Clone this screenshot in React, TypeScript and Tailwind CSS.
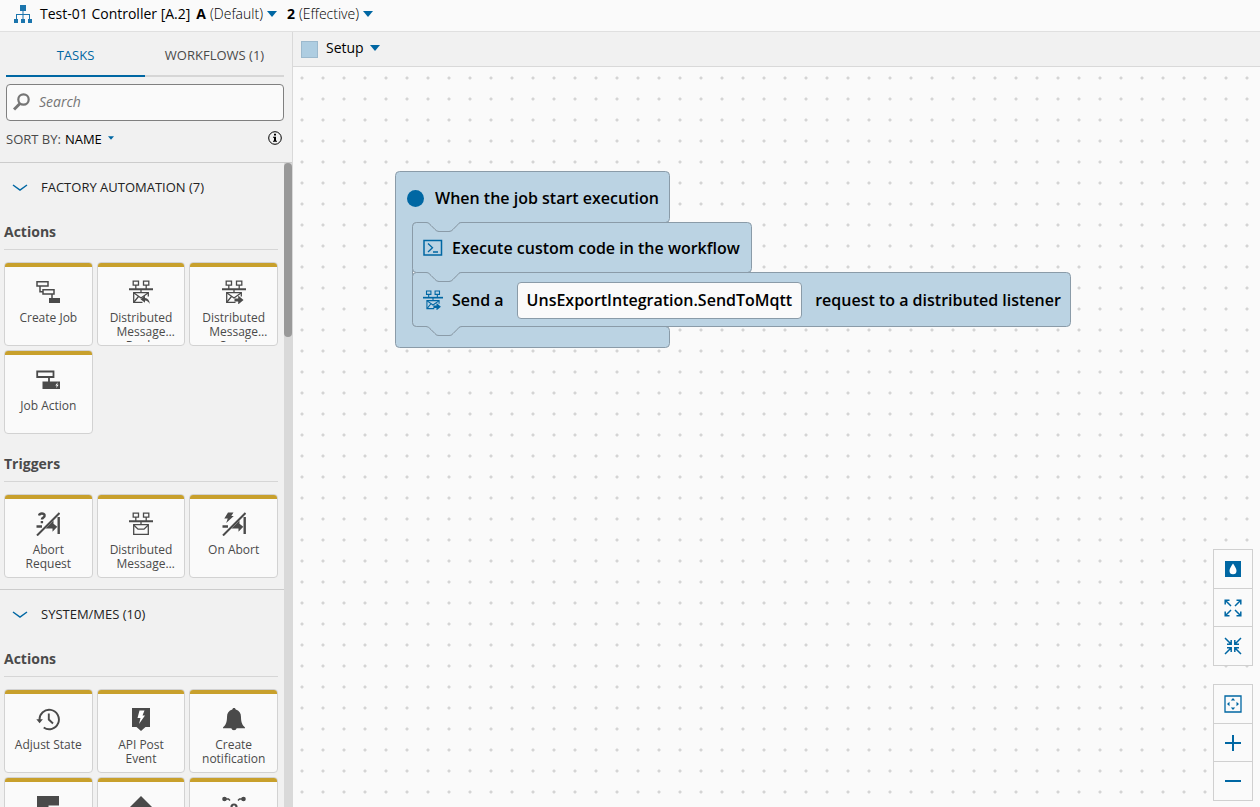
import type { ReactNode } from "react";

type IconProps = { className?: string };

function HierarchyIcon({ className }: IconProps) {
  return (
    <svg viewBox="0 0 18 18" className={className} fill="currentColor">
      <path d="M6 0h6v6H6zM0 14h4v4H0zM7 14h4v4H7zM14 14h4v4h-4z" />
      <path d="M8.500 6h1v3h6.500v5h-1v-4H9.500v4h-1v-4H3v4H2V9h6.500z" />
    </svg>
  );
}

function Caret({ className }: IconProps) {
  return (
    <svg viewBox="0 0 10 6" className={className} fill="currentColor">
      <path d="M0 0h10L5 6z" />
    </svg>
  );
}

function SearchIcon({ className }: IconProps) {
  return (
    <svg viewBox="0 0 18 18" className={className} fill="none" stroke="currentColor">
      <circle cx="10.500" cy="6.500" r="5.200" strokeWidth="2.200" />
      <path d="M7 10.500 1 16.500" strokeWidth="3" />
    </svg>
  );
}

function InfoIcon({ className }: IconProps) {
  return (
    <svg viewBox="0 0 14 14" className={className}>
      <circle cx="7" cy="7" r="6.300" fill="none" stroke="currentColor" />
      <path d="M6 2.800h2v1.800H6zM5 5.700h3v4h1v1H5v-1h1v-3H5z" fill="currentColor" />
    </svg>
  );
}

function ChevronIcon({ className }: IconProps) {
  return (
    <svg viewBox="0 0 16 8" className={className} fill="none" stroke="currentColor" strokeWidth="1.500">
      <path d="M1 1l7 5 7-5" />
    </svg>
  );
}

function CreateJobIcon({ className }: IconProps) {
  return (
    <svg viewBox="0 0 24 24" className={className} fill="none" stroke="currentColor" strokeWidth="1.500">
      <path d="M1 1.700h11v4.300H1zM7 9.700h11v4.300H7zM4 6v5.700h3M16 14v5" />
      <path d="M13 18h11v5H13z" fill="currentColor" stroke="none" />
    </svg>
  );
}

function JobActionIcon({ className }: IconProps) {
  return (
    <svg viewBox="0 0 24 24" className={className} fill="none" stroke="currentColor">
      <path d="M1.200 3.500h16.300v5.500H1.200zM13 9v5" strokeWidth="1.800" />
      <path d="M6.500 13.500H24V21H6.500z" fill="currentColor" stroke="none" />
      <path d="M21.800 14.200l-2.500 3.200h1.500l-.7 2.800 2.500-3.500h-1.500z" fill="#fff" stroke="none" />
    </svg>
  );
}

function NetworkMessageIcon({ className, tip }: IconProps & { tip?: "reply" | "send" }) {
  return (
    <svg viewBox="0 0 24 24" className={className} fill="none" stroke="currentColor" strokeWidth="1.300">
      <path d="M4.200 1.200h5.300v4H4.200zM14.500 1.200h5.300v4h-5.300zM6.800 5v4M17.200 5v4M12 9v3.500" />
      <path d="M0 9.200h24" strokeWidth="2" />
      <path d={tip ? "M13.500 22.300H4.700V12.700h14.600V16.500" : "M4.700 12.700h14.600v9.600H4.700z"} />
      <path d={tip ? "M5 13l7 5 7-5M5 22l4.500-5.500" : "M5 13.200l4 4h6l4-4"} />
      {tip === "send" && (
        <path d="M12.500 18.500h3.700v-3l5.300 4.500-5.300 4.500v-3h-3.700z" fill="currentColor" stroke="none" />
      )}
      {tip === "reply" && (
        <path d="M11.500 19.200l4.500-3.500v2.300c2.800.2 4.500 2.500 4.800 6-1.300-2.300-2.700-3.300-4.800-3.500v2.300z" fill="currentColor" stroke="none" />
      )}
    </svg>
  );
}

function AbortIcon({ className, variant }: IconProps & { variant: "question" | "bolt" }) {
  return (
    <svg viewBox="0 0 24 24" className={className} fill="none" stroke="currentColor">
      <path d="M1 23.500 23.500 1" strokeWidth="2" />
      <path d="M22.700 5v17" strokeWidth="2.400" />
      <path d="M.5 14.500H6" strokeWidth="2.600" />
      <path d="M9.500 16.500 17.500 8.500v3.200l3.800 3-4.800 5v-3.200z" fill="currentColor" stroke="none" />
      {variant === "question" ? (
        <path d="M3 3.500c.5-1.600 1.600-2 2.900-2 3.200 0 3.500 3 1.400 4.100-1.100.6-1.400 1-1.400 2M5.900 9v2.200" strokeWidth="2.400" />
      ) : (
        <path d="M6 .5h5.500L9.300 4h2.500L4.200 11l1.500-4.500H2.300z" fill="currentColor" stroke="none" />
      )}
    </svg>
  );
}

function HistoryIcon({ className }: IconProps) {
  return (
    <svg viewBox="0 0 24 24" className={className} fill="none" stroke="currentColor" strokeWidth="1.900">
      <path d="M3.500 13A9.700 9.700 0 1 1 7.700 20.500" />
      <path d="M12.800 6.500v6l4.200 4" />
      <path d="M.3 12.300h6.600L3.600 16.300z" fill="currentColor" stroke="none" />
    </svg>
  );
}

function ApiPostIcon({ className }: IconProps) {
  return (
    <svg viewBox="0 0 24 24" className={className} fill="currentColor">
      <path d="M3 1h18v19h-4.500L12 24l-4.500-4H3z" />
      <path d="M10.500 3.500h5L13.500 8.500H16l-6 8.500 1.500-6H8.500z" fill="#fff" />
    </svg>
  );
}

function BellIcon({ className }: IconProps) {
  return (
    <svg viewBox="0 0 24 24" className={className} fill="currentColor">
      <path d="M12 1c1 0 1.600.7 1.700 1.600 3.500.9 5.300 3.700 5.300 7.400 0 6 1.500 8 4 10.500v.8h-8.300a2.800 2.800 0 0 1-5.400 0H1v-.8C3.500 18 5 16 5 10c0-3.700 1.800-6.500 5.300-7.400C10.400 1.700 11 1 12 1z" />
    </svg>
  );
}

function NoteIcon({ className }: IconProps) {
  return (
    <svg viewBox="0 0 24 24" className={className} fill="currentColor">
      <path d="M1 1h22v9.500H12.500V23H1z" />
    </svg>
  );
}

function DiamondIcon({ className }: IconProps) {
  return (
    <svg viewBox="0 0 24 24" className={className} fill="currentColor">
      <path d="M12 1l11 11-11 11L1 12z" />
    </svg>
  );
}

function NodesIcon({ className }: IconProps) {
  return (
    <svg viewBox="0 0 24 24" className={className} fill="none" stroke="currentColor" strokeWidth="1.500">
      <path d="M3 4h3.500l1.500 1.500M21 4h-3.500L16 5.500M3 20h3.500L8 18.500M21 20h-3.500L16 18.500" />
      <circle cx="12" cy="12" r="2.500" strokeWidth="2.200" />
      <circle cx="2.500" cy="4" r="2.300" fill="currentColor" stroke="none" />
      <circle cx="21.500" cy="4" r="2.300" fill="currentColor" stroke="none" />
      <circle cx="2.500" cy="20" r="2.300" fill="currentColor" stroke="none" />
      <circle cx="21.500" cy="20" r="2.300" fill="currentColor" stroke="none" />
    </svg>
  );
}

function ConsoleIcon({ className }: IconProps) {
  return (
    <svg viewBox="0 0 20 18" className={className} fill="none" stroke="currentColor">
      <path d="M1 1.500h17.500v14.500H1z" strokeWidth="1.500" />
      <path d="M5 4.500l4.500 4.200L5 13M10 13h5" strokeWidth="1.300" />
    </svg>
  );
}

function DropIcon() {
  return (
    <svg viewBox="0 0 18 18" className="size-[18px]">
      <path d="M1 1h16v16H1z" fill="currentColor" />
      <path d="M9 3.500c1.500 2.500 3.500 4.800 3.500 7.200a3.500 3.500 0 0 1-7 0c0-2.400 2-4.700 3.500-7.200z" fill="#fff" />
    </svg>
  );
}

function ExpandIcon() {
  return (
    <svg viewBox="0 0 18 18" className="size-[18px]" fill="none" stroke="currentColor" strokeWidth="1.500">
      <path d="M7 7 1.500 1.500M1.200 5.500V1.200h4.300M11 7l5.500-5.500M12.500 1.200h4.300v4.300M7 11l-5.500 5.500M1.200 12.500v4.300h4.300M11 11l5.500 5.500M16.800 12.500v4.300h-4.300" />
    </svg>
  );
}

function CollapseIcon() {
  return (
    <svg viewBox="0 0 18 18" className="size-[18px]" fill="none" stroke="currentColor" strokeWidth="1.500">
      <path d="M1 1l6 6M7.200 3v4.200H3M17 1l-6 6M10.800 3v4.200H15M1 17l6-6M7.200 15v-4.200H3M17 17l-6-6M10.800 15v-4.200H15" />
    </svg>
  );
}

function FitIcon() {
  return (
    <svg viewBox="0 0 18 18" className="size-[18px]" fill="currentColor">
      <path d="M1 1h16v16H1z" fill="none" stroke="currentColor" strokeWidth="1.300" />
      <path d="M9 3l2.200 2.500H6.800zM9 15l2.200-2.500H6.800zM3 9l2.500-2.200v4.400zM15 9l-2.500-2.200v4.400z" />
    </svg>
  );
}

function PlusIcon() {
  return (
    <svg viewBox="0 0 18 18" className="size-[18px]" fill="none" stroke="currentColor" strokeWidth="2">
      <path d="M9 1v16M1 9h16" />
    </svg>
  );
}

function MinusIcon() {
  return (
    <svg viewBox="0 0 18 18" className="size-[18px]" fill="none" stroke="currentColor" strokeWidth="2">
      <path d="M1 9h16" />
    </svg>
  );
}

type Task = { label: string; icon: ReactNode };
type Group = { title: string; tasks: Task[] };
type Section = { title: string; groups: Group[] };

const sections: Section[] = [
  {
    title: "FACTORY AUTOMATION (7)",
    groups: [
      {
        title: "Actions",
        tasks: [
          { label: "Create Job", icon: <CreateJobIcon className="size-6" /> },
          { label: "Distributed Message Reply", icon: <NetworkMessageIcon className="size-6" tip="reply" /> },
          { label: "Distributed Message Send", icon: <NetworkMessageIcon className="size-6" tip="send" /> },
          { label: "Job Action", icon: <JobActionIcon className="size-6" /> },
        ],
      },
      {
        title: "Triggers",
        tasks: [
          { label: "Abort Request", icon: <AbortIcon className="size-6" variant="question" /> },
          { label: "Distributed Message consumer", icon: <NetworkMessageIcon className="size-6" /> },
          { label: "On Abort", icon: <AbortIcon className="size-6" variant="bolt" /> },
        ],
      },
    ],
  },
  {
    title: "SYSTEM/MES (10)",
    groups: [
      {
        title: "Actions",
        tasks: [
          { label: "Adjust State", icon: <HistoryIcon className="size-6" /> },
          { label: "API Post Event", icon: <ApiPostIcon className="size-6" /> },
          { label: "Create notification", icon: <BellIcon className="size-6" /> },
          { label: "", icon: <NoteIcon className="size-6" /> },
          { label: "", icon: <DiamondIcon className="size-6" /> },
          { label: "", icon: <NodesIcon className="size-6" /> },
        ],
      },
    ],
  },
];

function TaskCard({ task }: { task: Task }) {
  return (
    <button className="flex h-[84px] min-w-0 flex-col items-center overflow-hidden rounded-sm border border-[#d2d2d2] bg-[#fafafa] text-[#4a4a4a]">
      <span className="h-1 w-full shrink-0 bg-[#c8a02c]" />
      <span className="mt-[13px] shrink-0">{task.icon}</span>
      <span className="mt-[5px] line-clamp-2 w-full px-2 pb-[3px] pt-0.5 text-center text-xs leading-[14px]">
        {task.label}
      </span>
    </button>
  );
}

function TaskSection({ section }: { section: Section }) {
  return (
    <section className="border-b border-[#cccccc] pb-[11px]">
      <button className="flex h-[50px] w-full items-center gap-[13px] pl-3 text-[13px] text-[#222]">
        <ChevronIcon className="h-2 w-4 text-[#0067a3]" />
        {section.title}
      </button>
      <div className="flex flex-col gap-[11px] pl-1 pr-1.5">
        {section.groups.map((group) => (
          <div key={group.title}>
            <h3 className="mb-3 flex h-[37px] items-center border-b border-[#d6d6d6] pt-0.5 text-sm font-bold text-[#4a4a4a]">
              {group.title}
            </h3>
            <div className="grid grid-cols-3 gap-1">
              {group.tasks.map((task, i) => (
                <TaskCard key={i} task={task} />
              ))}
            </div>
          </div>
        ))}
      </div>
    </section>
  );
}

function Sidebar() {
  return (
    <aside className="flex w-[293px] shrink-0 flex-col border-r border-[#d9d9d9]">
      <div className="pl-1.5 pr-2">
        <div role="tablist" className="flex text-[13px]">
          <button role="tab" aria-selected="true" className="h-[45px] flex-1 border-b-2 border-[#0067a3] pt-1 text-[#0067a3]">
            TASKS
          </button>
          <button role="tab" aria-selected="false" className="h-[45px] flex-1 border-b-2 border-[#d6d6d6] pt-1 text-[#4a4a4a]">
            WORKFLOWS (1)
          </button>
        </div>
        <label className="mt-[7px] flex h-[37px] items-center gap-2 rounded border border-[#808080] bg-[#fafafa] px-1.5 pb-0.5">
          <SearchIcon className="size-[18px] shrink-0 text-[#757575]" />
          <input
            type="text"
            aria-label="Search"
            placeholder="Search"
            className="min-w-0 flex-1 bg-transparent text-sm outline-none placeholder:italic placeholder:text-[#757575]"
          />
        </label>
        <div className="flex h-[41px] items-center justify-between pb-1 text-[#4a4a4a]">
          <button className="flex items-center gap-1 text-[13px]">
            SORT BY: <span className="text-black">NAME</span>
            <Caret className="mb-1 ml-0.5 h-1 w-1.5 text-[#0067a3]" />
          </button>
          <button aria-label="Info" className="mb-1 mr-0.5 text-black">
            <InfoIcon className="size-3.5" />
          </button>
        </div>
      </div>
      <div className="flex min-h-0 flex-1 border-t border-[#cccccc]">
        <div className="min-w-0 flex-1 overflow-hidden">
          {sections.map((section) => (
            <TaskSection key={section.title} section={section} />
          ))}
        </div>
        <div className="w-2 bg-[#d9d9d9]">
          <div className="h-[27%] rounded-full bg-[#999]" />
        </div>
      </div>
    </aside>
  );
}

// outlines of the stacked blocks, drawn in the stack's own coordinates
const EVENT_BLOCK =
  "M4.500.500H270.500a4 4 0 0 1 4 4V47.500a4 4 0 0 1-4 4H67c-3 0-3 1-5 3l-4 4c-1 1-2 2-4 2H44c-2 0-3-1-4-2l-4-4c-2-2-3-3-5-3H21.500a4 4 0 0 0-4 4V151.500a4 4 0 0 0 4 4H31c2 0 3 1 5 3l4 4c1 1 2 2 4 2H54c2 0 3-1 4-2l4-4c2-2 2-3 5-3H270.500a4 4 0 0 1 4 4V172.500a4 4 0 0 1-4 4H4.500a4 4 0 0 1-4-4V4.500a4 4 0 0 1 4-4z";
const CODE_BLOCK =
  "M21.500 51.500H31c2 0 3 1 5 3l4 4c1 1 2 2 4 2H54c2 0 3-1 4-2l4-4c2-2 2-3 5-3H352.500a4 4 0 0 1 4 4V97.500a4 4 0 0 1-4 4H67c-3 0-3 1-5 3l-4 4c-1 1-2 2-4 2H44c-2 0-3-1-4-2l-4-4c-2-2-3-3-5-3H21.500a4 4 0 0 1-4-4V55.500a4 4 0 0 1 4-4z";
const SEND_BLOCK =
  "M21.500 101.500H31c2 0 3 1 5 3l4 4c1 1 2 2 4 2H54c2 0 3-1 4-2l4-4c2-2 2-3 5-3H671.500a4 4 0 0 1 4 4V151.500a4 4 0 0 1-4 4H67c-3 0-3 1-5 3l-4 4c-1 1-2 2-4 2H44c-2 0-3-1-4-2l-4-4c-2-2-3-3-5-3H21.500a4 4 0 0 1-4-4V105.500a4 4 0 0 1 4-4z";

function BlockStack() {
  return (
    <div className="absolute left-[102px] top-[104px] w-[676px] whitespace-nowrap text-base font-semibold text-black">
      <svg viewBox="0 0 676 177" className="absolute inset-0 h-[177px] w-[676px]" fill="#bbd3e3" stroke="#8a9ba8">
        <path d={EVENT_BLOCK} />
        <path d={CODE_BLOCK} />
        <path d={SEND_BLOCK} />
      </svg>
      <div className="relative">
        <div className="flex h-[52px] items-center gap-[11px] pl-3 pt-0.5">
          <span className="size-[17px] rounded-full bg-[#0067a3]" />
          When the job start execution
        </div>
        <div className="flex h-[50px] items-center gap-[9px] pl-7">
          <ConsoleIcon className="h-[18px] w-5 text-[#0067a3]" />
          Execute custom code in the workflow
        </div>
        <div className="flex h-[54px] items-center gap-[9px] pl-7">
          <NetworkMessageIcon className="size-5 text-[#0067a3]" tip="send" />
          Send a
          <button className="ml-1 h-[37px] rounded border border-[#8a9ba8] bg-[#fafafa] px-[9px]">
            UnsExportIntegration.SendToMqtt
          </button>
          <span className="ml-1">request to a distributed listener</span>
        </div>
      </div>
    </div>
  );
}

type Tool = { label: string; icon: ReactNode };

function ToolGroup({ tools }: { tools: Tool[] }) {
  return (
    <div className="flex h-[117px] w-10 flex-col divide-y divide-[#d0d0d0] border border-[#d0d0d0] bg-[#fafafa] text-[#0067a3]">
      {tools.map((tool) => (
        <button key={tool.label} aria-label={tool.label} className="flex flex-1 items-center justify-center">
          {tool.icon}
        </button>
      ))}
    </div>
  );
}

function Canvas() {
  return (
    <main className="relative min-h-0 flex-1 overflow-hidden bg-[#fafafa] bg-[radial-gradient(circle_at_11px_11px,#d4d4d4_1px,transparent_2px)] bg-[length:21px_21px] bg-[position:-2px_0px]">
      <BlockStack />
      <div className="absolute bottom-1.5 right-[7px] flex flex-col gap-[18px]">
        <ToolGroup
          tools={[
            { label: "Toggle colors", icon: <DropIcon /> },
            { label: "Expand all", icon: <ExpandIcon /> },
            { label: "Collapse all", icon: <CollapseIcon /> },
          ]}
        />
        <ToolGroup
          tools={[
            { label: "Zoom to fit", icon: <FitIcon /> },
            { label: "Zoom in", icon: <PlusIcon /> },
            { label: "Zoom out", icon: <MinusIcon /> },
          ]}
        />
      </div>
    </main>
  );
}

export default function App() {
  return (
    <div className="flex h-screen flex-col overflow-hidden bg-[#f1f1f1] font-['Open_Sans','Noto_Sans',sans-serif]">
      <header className="flex h-8 shrink-0 items-center border-b border-[#e0e0e0] bg-[#fafafa] pb-1 pl-[14px] text-sm text-black">
        <HierarchyIcon className="size-[18px] text-[#1b75ad]" />
        <h1 className="ml-2">Test-01 Controller [A.2]</h1>
        <button className="ml-1.5 flex items-center gap-1">
          <b>A</b> <span className="font-light">(Default)</span>
          <Caret className="h-1.5 w-2.5 text-[#0067a3]" />
        </button>
        <button className="ml-2.5 flex items-center gap-1">
          <b>2</b> <span className="font-light">(Effective)</span>
          <Caret className="h-1.5 w-2.5 text-[#0067a3]" />
        </button>
      </header>
      <div className="flex min-h-0 flex-1">
        <Sidebar />
        <div className="flex min-w-0 flex-1 flex-col">
          <div className="flex h-[35px] shrink-0 items-center border-b border-[#d9d9d9] pl-2 text-sm text-black">
            <span className="size-[17px] border border-[#9cb9cd] bg-[#aecde1]" />
            <button className="ml-2 flex items-center gap-1.5 pb-0.5">
              Setup
              <Caret className="h-1.5 w-2.5 text-[#0067a3]" />
            </button>
          </div>
          <Canvas />
        </div>
      </div>
    </div>
  );
}
